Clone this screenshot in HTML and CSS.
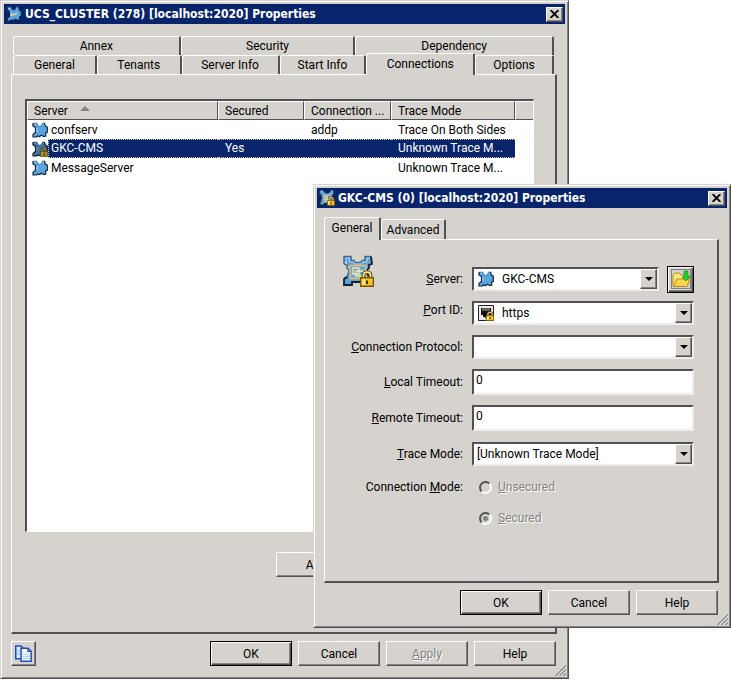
FILE: index.html
```html
<!DOCTYPE html>
<html lang="en">
<head>
<meta charset="utf-8">
<title>UCS_CLUSTER Properties</title>
<link rel="stylesheet" href="styles.css">
</head>
<body>
<svg class="defs" aria-hidden="true">
  <defs>
    <symbol id="puzzle" viewBox="0 0 16 16">
      <path d="M1.500 1.200h3.500l.7 2.300 1.800.8 2-.8 1-2.500h2l.8 3 2 1v5.500l-1.800.5.300 3-2 .5-2.300-1.200-2 1.200-2-.5-1 1H1.500L1 12l2.500-1.500V5.500L1 4z" fill="#5aa5e0"/>
      <path d="M1.500 4L1 1.200h4l.7 2.300 1.800.8 2-.8 1-2.500h2" fill="none" stroke="#3f6f9d" stroke-width=".8"/>
      <path d="M12.500 1l.8 3 2 1v5.500l-1.800.5.300 3-2 .5-2.300-1.200-2 1.200-2-.5-1 1H1L1 12.500l2.500-2V5.500L1 4V1.200" fill="none" stroke="#0b2444" stroke-width="1.200"/>
      <path d="M2.500 2.500h1.500M11 2.500h1M5 6v4" stroke="#a8dcff"/>
    </symbol>
    <symbol id="lock" viewBox="0 0 10 12">
      <path d="M2.500 6V3.500q0-2 2.500-2t2.500 2V6" fill="none" stroke="#5a4200" stroke-width="2.600"/>
      <path d="M2.500 6V3.500q0-2 2.500-2t2.500 2V6" fill="none" stroke="#ffe9a0" stroke-width="1.200"/>
      <path d="M.5 5.500h9v6h-9z" fill="#f7c22e" stroke="#7b5600"/>
      <path d="M1.500 6.500h2v4h-2z" fill="#ffe98a"/>
      <path d="M5 7.500v2.500" stroke="#3a2a00" stroke-width="1.400"/>
    </symbol>
    <symbol id="app" viewBox="0 0 32 32">
      <path d="M2 1h7v4h3l1 2h6l1-2h3V1h7v8l-3 1v3l-2 2v4l2 2v2l3 1v6h-8v-3H10v3H2v-8l3-1v-3l2-2v-4l-2-2v-3l-3-1z" fill="#5aa0dc"/>
      <path d="M2 9V1.500h7v4h3l1 2h6l1-2h3v-4h6M2 9l3 1v3l2 2v4l-2 2v3" fill="none" stroke="#46678c" stroke-width="1.500"/>
      <path d="M29 1.500 30 9l-3 1v3l-2 2v4l2 2v2l3 1v6h-8v-3H10v3H2v-6l3-2" fill="none" stroke="#14202e" stroke-width="1.800"/>
      <path d="M4 8V3h3.500v4h4l1 2h7l1-2H25V3h3" fill="none" stroke="#a9d9fb"/>
      <path d="M8 10.500h16v13H8z" fill="#67a8dd" stroke="#f2c463" stroke-width="1.300"/>
      <path d="M11 13h6v6h-6zM14 16h7v5h-7z" fill="none" stroke="#ffe6a4" stroke-width="1.300"/>
    </symbol>
    <symbol id="grip" viewBox="0 0 12 12">
      <path d="M1 12 12 1M5 12l7-7M9 12l3-3" stroke="#848284" stroke-width="1.500"/>
      <path d="M0 12 12 0M4 12l8-8M8 12l4-4" stroke="#fff" stroke-width=".6"/>
    </symbol>
  </defs>
</svg>

<main class="window main-window">
  <header class="titlebar">
    <svg class="icon" viewBox="0 0 16 16"><use href="#puzzle"/><path d="M5 9.500l2-1h2l2-1.500" stroke="#ffd070" stroke-width="1.500" fill="none"/></svg>
    <h1>UCS_CLUSTER (278) [localhost:2020] Properties</h1>
    <button class="close" aria-label="Close"><svg viewBox="0 0 8 7"><path d="M.5 0l7 7M7.500 0l-7 7" stroke="#000" stroke-width="1.700"/></svg></button>
  </header>
  <nav class="tabs">
    <div class="tab-row back-row">
      <button>Annex</button><button>Security</button><button>Dependency</button>
    </div>
    <div class="tab-row front-row">
      <button>General</button><button>Tenants</button><button>Server Info</button><button>Start Info</button><button class="selected">Connections</button><button>Options</button>
    </div>
  </nav>
  <section class="panel main-panel">
    <div class="list">
      <table>
        <colgroup><col class="c-server"><col class="c-secured"><col class="c-protocol"><col class="c-trace"><col></colgroup>
        <thead>
          <tr><th>Server <span class="sort"></span></th><th>Secured</th><th>Connection ...</th><th>Trace Mode</th><th></th></tr>
        </thead>
        <tbody>
          <tr><td><span class="name"><svg class="icon"><use href="#puzzle"/></svg><span>confserv</span></span></td><td></td><td>addp</td><td>Trace On Both Sides</td><td></td></tr>
          <tr class="selected"><td><span class="name"><svg class="icon dim" viewBox="0 0 16 16"><use href="#puzzle"/><use href="#lock" x="8" y="6" width="8" height="10"/></svg><span>GKC-CMS</span></span></td><td>Yes</td><td></td><td>Unknown Trace M...</td><td></td></tr>
          <tr><td><span class="name"><svg class="icon"><use href="#puzzle"/></svg><span>MessageServer</span></span></td><td></td><td></td><td>Unknown Trace M...</td><td></td></tr>
        </tbody>
      </table>
    </div>
    <button class="btn add">Add</button>
  </section>
  <footer class="actions">
    <button class="btn copy" aria-label="Copy"><svg viewBox="0 0 16 16"><path d="M.7 1h5l2 2v10h-7z" fill="#d6efff" stroke="#2149c6" stroke-width="1.400"/><path d="M5.700 3h6.500l3 3v9.300H5.700z" fill="#fff" stroke="#2149c6" stroke-width="1.400"/><path d="M12 3v3h3" fill="none" stroke="#2149c6"/><path d="M2 5h2.500M2 7h2.500M2 9h2.500M7 8.500h7M7 10.500h7M7 12.500h7" stroke="#8fcaf5"/></svg></button>
    <button class="btn default">OK</button>
    <button class="btn">Cancel</button>
    <button class="btn" disabled><u>A</u>pply</button>
    <button class="btn">Help</button>
  </footer>
  <svg class="grip"><use href="#grip"/></svg>
</main>

<section class="window dialog" role="dialog" aria-labelledby="dialog-title">
  <header class="titlebar">
    <svg class="icon" viewBox="0 0 16 16"><use href="#app"/><use href="#lock" x="8" y="6" width="8" height="10"/></svg>
    <h2 id="dialog-title">GKC-CMS (0) [localhost:2020] Properties</h2>
    <button class="close" aria-label="Close"><svg viewBox="0 0 8 7"><path d="M.5 0l7 7M7.500 0l-7 7" stroke="#000" stroke-width="1.700"/></svg></button>
  </header>
  <nav class="tabs">
    <div class="tab-row dialog-row"><button class="selected">General</button><button>Advanced</button></div>
  </nav>
  <form class="panel dialog-panel">
    <svg class="big-icon" viewBox="0 0 32 32"><use href="#app"/><use href="#lock" x="18" y="15" width="14" height="17"/></svg>
    <div class="fields">
      <label for="server"><u>S</u>erver:</label>
      <div class="server-field">
        <div class="combo with-icon"><svg class="icon"><use href="#puzzle"/></svg><select id="server"><option>GKC-CMS</option></select><span class="arrow"></span></div>
        <button type="button" class="btn default browse" aria-label="Browse"><svg viewBox="0 0 20 20"><path d="M.5.5h19v19H.5z" fill="none" stroke="#333" stroke-dasharray="1 1"/><path d="M2 17V6l2-2h4l2 2h6v11z" fill="#ffe97d" stroke="#b58a16"/><path d="M2.500 17.500 6 10h13l-3 7.500z" fill="#ffd64a" stroke="#b58a16"/><path d="M13 2h4v5h2.500L15 12l-4-4h2z" fill="#20cf32" stroke="#0a8d1c" stroke-width=".7"/></svg></button>
      </div>
      <label class="port-label" for="port"><u>P</u>ort ID:</label>
      <div class="combo with-icon"><svg class="icon" viewBox="0 0 16 16"><path d="M.5.5h15v15H.5z" fill="#e9e7e2" stroke="#222"/><path d="M3 3h10v7h-2v2H9v1H7v-1H5v-2H3z" fill="#111"/><path d="M5 3v3M7 3v3M9 3v3M11 3v3" stroke="#ddd" stroke-width=".8"/><use href="#lock" x="7" y="6" width="10" height="10"/></svg><select id="port"><option>https</option></select><span class="arrow"></span></div>
      <label for="protocol"><u>C</u>onnection Protocol:</label>
      <div class="combo"><select id="protocol"><option></option></select><span class="arrow"></span></div>
      <label for="local"><u>L</u>ocal Timeout:</label>
      <input class="text" id="local" type="text" value="0">
      <label for="remote"><u>R</u>emote Timeout:</label>
      <input class="text" id="remote" type="text" value="0">
      <label for="trace"><u>T</u>race Mode:</label>
      <div class="combo"><select id="trace"><option>[Unknown Trace Mode]</option></select><span class="arrow"></span></div>
      <span class="caption">Connection <u>M</u>ode:</span>
      <label class="choice"><input type="radio" name="mode" disabled><span><u>U</u>nsecured</span></label>
      <label class="choice second"><input type="radio" name="mode" checked disabled><span><u>S</u>ecured</span></label>
    </div>
  </form>
  <footer class="actions">
    <button class="btn default">OK</button>
    <button class="btn">Cancel</button>
    <button class="btn">Help</button>
  </footer>
  <svg class="grip"><use href="#grip"/></svg>
</section>
</body>
</html>
```
FILE: styles.css
```css
:root {
  --face: #d6d3ce;
  --shadow: #848284;
  --dark: #525052;
  --navy: #08246b;
}

* { box-sizing: border-box; }

body {
  margin: 0;
  background: #fff;
  color: #000;
  font: 12px/16px Roboto, "Liberation Sans", sans-serif;
}

button, input, select { font: inherit; color: inherit; }
button { padding: 0; background: var(--face); }
.defs { position: absolute; width: 0; height: 0; }
.icon { width: 16px; height: 16px; flex: none; }

.window {
  display: flex;
  flex-direction: column;
  padding: 2px;
  background: var(--face);
  border: 1px solid var(--dark);
  border-top-color: var(--face);
  border-left-color: var(--face);
  box-shadow: inset 1px 1px #fff, inset -1px -1px var(--shadow);
}
.main-window {
  position: relative;
  min-height: calc(100vh - 1px);
  margin-right: 162px;
}
.dialog {
  position: absolute;
  top: 184px;
  left: 313px;
  right: 0;
}

.titlebar {
  display: flex;
  align-items: center;
  gap: 3px;
  height: 20px;
  margin: 1px;
  padding: 0 2px;
  background: var(--navy);
  color: #fff;
}
.titlebar h1, .titlebar h2 {
  flex: 1;
  margin: 0;
  font: bold 12px/20px "DejaVu Sans Condensed", "Noto Sans", sans-serif;
  white-space: nowrap;
}
.close {
  display: grid;
  place-items: center;
  width: 17px;
  height: 15px;
  border: 1px solid #fff;
  border-right-color: var(--dark);
  border-bottom-color: var(--dark);
  box-shadow: inset -1px -1px var(--shadow);
}
.close svg { width: 9px; height: 8px; }

.tabs { margin: 11px 12px 0 10px; }
.dialog .tabs { margin: 8px 9px 0 8px; }
.tab-row { display: grid; align-items: end; }
.back-row { grid-template-columns: 168fr 175fr 199fr; }
.front-row { grid-template-columns: 84fr 85fr 98fr 87fr 109fr 79fr; }
.dialog-row { grid-template-columns: 57px 65px; }
.tab-row button {
  height: 19px;
  border: 1px solid #fff;
  border-right: 2px solid var(--dark);
  border-bottom: 0;
  border-radius: 3px 2px 0 0;
}
.tab-row .selected {
  position: relative;
  z-index: 1;
  height: 22px;
  margin-top: -3px;
  margin-bottom: -1px;
  padding-bottom: 2px;
}
.dialog-row button { height: 20px; }
.dialog-row .selected { height: 23px; margin-top: 0; }

.panel {
  border: 1px solid #fff;
  border-right: 2px solid var(--dark);
  border-bottom: 2px solid var(--dark);
}
.main-panel {
  display: flex;
  flex: 1;
  flex-direction: column;
  align-items: center;
  margin: 0 9px 0 8px;
  padding: 24px 21px 55px 13px;
}
.dialog-panel {
  display: flex;
  margin: 0 9px 0 8px;
  padding: 15px 23px 47px 17px;
}

.list {
  flex: 1;
  align-self: stretch;
  background: #fff;
  border: 2px solid var(--dark);
  border-right: 1px solid #fff;
  border-bottom: 1px solid #fff;
}
table { width: 100%; border-spacing: 0; table-layout: fixed; }
.c-server { width: 191px; }
.c-secured { width: 86px; }
.c-protocol { width: 87px; }
.c-trace { width: 124px; }
th {
  height: 19px;
  padding: 0 0 0 6px;
  background: var(--face);
  border: 1px solid #fff;
  border-right-color: var(--dark);
  border-bottom-color: var(--dark);
  font-weight: normal;
  text-align: left;
  white-space: nowrap;
}
th:last-child { border-right: 0; }
.sort {
  display: inline-block;
  margin: 0 0 4px 9px;
  border: 5px solid transparent;
  border-top: 0;
  border-bottom-color: var(--shadow);
}
td { height: 19px; padding: 0 0 0 7px; white-space: nowrap; }
td:first-child { padding-left: 5px; }
.name { display: flex; align-items: center; }
.name span { flex: 1; padding-left: 3px; }
.selected td { color: #fff; }
.selected td:not(:first-child):not(:last-child), .selected .name span {
  height: 19px;
  line-height: 17px;
  background: var(--navy);
  border: 0 dotted #d6c994;
  border-width: 1px 0;
}
.selected .name span { border-left-width: 1px; padding-left: 2px; }
.dim { filter: brightness(.7); }

.btn {
  width: 82px;
  height: 25px;
  border: 1px solid #fff;
  border-right-color: var(--dark);
  border-bottom-color: var(--dark);
  box-shadow: inset -1px -1px var(--shadow);
}
.btn.default {
  border-color: #000;
  box-shadow: inset 1px 1px #fff, inset -1px -1px var(--dark), inset -2px -2px var(--shadow);
}
.btn:disabled { color: var(--shadow); text-shadow: 1px 1px #fff; }
.add { margin: 20px 0 0 74px; }
.actions {
  display: flex;
  justify-content: flex-end;
  gap: 6px;
  padding: 7px 10px 10px 8px;
}
.copy { display: grid; place-items: center; width: 25px; margin-right: auto; }
.copy svg { width: 17px; height: 17px; }
.grip { position: absolute; right: 2px; bottom: 2px; width: 12px; height: 12px; }

.big-icon { width: 32px; height: 32px; flex: none; }
.fields {
  display: grid;
  flex: 1;
  grid-template-columns: 89px 1fr;
  grid-template-rows: 34px 34px 34px 36px 36px 36px 30px 32px;
  column-gap: 9px;
  align-items: center;
  margin-top: 7px;
}
.fields > label:not(.choice), .caption { justify-self: end; white-space: nowrap; }
.port-label { padding-bottom: 6px; }
.server-field { display: flex; align-items: center; gap: 8px; }
.combo, .text {
  width: 100%;
  background: #fff;
  border: 2px solid var(--dark);
  border-right-color: #efedea;
  border-bottom-color: #efedea;
}
.combo { display: grid; grid-template-columns: 1fr; align-items: center; height: 24px; }
.combo > * { grid-row: 1; grid-column: 1; }
.combo .icon { z-index: 1; margin-left: 4px; pointer-events: none; }
.combo select {
  width: 100%;
  height: 20px;
  padding: 0 20px 0 3px;
  appearance: none;
  background: none;
  border: 0;
}
.with-icon select { padding-left: 28px; }
.arrow {
  display: grid;
  place-items: center;
  justify-self: end;
  width: 17px;
  height: 20px;
  background: var(--face);
  border: 1px solid #fff;
  border-right-color: var(--dark);
  border-bottom-color: var(--dark);
  box-shadow: inset -1px -1px var(--shadow);
  pointer-events: none;
}
.arrow::after { content: ""; border: 4px solid transparent; border-top-color: #000; border-bottom: 0; }
.text { height: 26px; padding: 0 2px 4px; }
.browse { display: grid; place-items: center; flex: none; width: 27px; height: 27px; }
.browse svg { width: 20px; height: 20px; }
.choice { display: flex; align-items: center; gap: 6px; padding-left: 7px; color: var(--shadow); text-shadow: 1px 1px #fff; }
.second { grid-column: 2; }
.choice input {
  display: grid;
  place-items: center;
  width: 13px;
  height: 13px;
  margin: 0;
  appearance: none;
  border: 2px solid var(--dark);
  border-right-color: #fff;
  border-bottom-color: #fff;
  border-radius: 50%;
}
.choice input:checked::after { content: ""; width: 5px; height: 5px; border-radius: 50%; background: var(--shadow); }
```
